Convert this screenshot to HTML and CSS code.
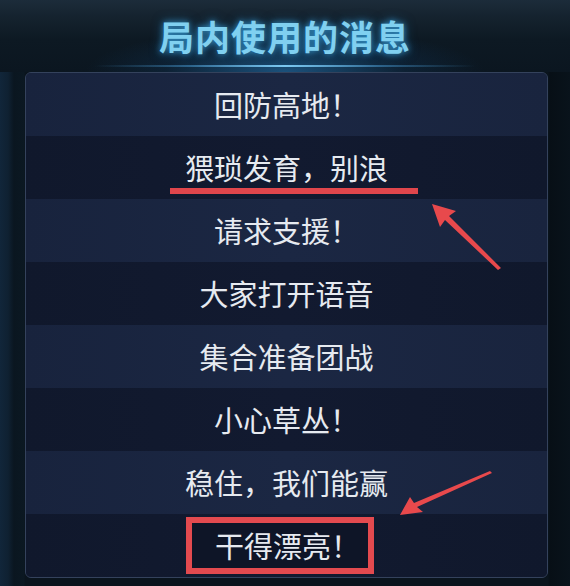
FILE: index.html
```html
<!DOCTYPE html>
<html lang="zh-CN">
<head>
<meta charset="utf-8">
<title>局内使用的消息</title>
<link rel="stylesheet" href="styles.css">
</head>
<body>
<div class="screen">
  <header class="header">
    <h1 class="title">局内使用的消息</h1>
    <div class="glow-line"></div>
  </header>
  <main class="panel">
    <div class="row odd"><span class="msg">回防高地！</span></div>
    <div class="row even"><span class="msg">猥琐发育，别浪<span class="underline"></span></span></div>
    <div class="row odd"><span class="msg">请求支援！</span></div>
    <div class="row even"><span class="msg">大家打开语音</span></div>
    <div class="row odd"><span class="msg">集合准备团战</span></div>
    <div class="row even"><span class="msg">小心草丛！</span></div>
    <div class="row odd"><span class="msg">稳住，我们能赢</span></div>
    <div class="row even"><span class="msg boxed">干得漂亮！</span></div>
  </main>
  <svg class="arrows" width="570" height="586" viewBox="0 0 570 586">
    <polygon points="432,204 456,211 449,216 501,268 498,270 445,220 440,227" fill="#e8494c"/>
    <polygon points="400,515 410,497 414,503 490,471 492,473 417,507 423,512" fill="#e8494c"/>
  </svg>
</div>
</body>
</html>
```
FILE: styles.css
```css
html, body {
  margin: 0;
  padding: 0;
}
body {
  width: 570px;
  height: 586px;
  overflow: hidden;
  background: #0a141d;
  font-family: "Noto Sans CJK SC", "Noto Sans", sans-serif;
}
.screen {
  position: relative;
  width: 570px;
  height: 586px;
  background:
    linear-gradient(90deg, #11263a 0px, #0f2132 8px, #0a1620 14px, #0b1822 24px, transparent 25px, transparent 548px, #070f16 550px, #09131b 570px);
}
.header {
  height: 72px;
  position: relative;
  background:
    radial-gradient(ellipse 200px 44px at 50% 100%, rgba(40, 130, 200, 0.55), rgba(20, 70, 120, 0.22) 60%, transparent 100%),
    linear-gradient(180deg, #1c2c3a 0px, #15232f 16px, #0d1923 40px, #0b1620 72px);
  display: flex;
  flex-direction: column;
  align-items: center;
}
.title {
  margin: 14px 0 0 0;
  font-size: 35px;
  line-height: 44px;
  font-weight: 700;
  letter-spacing: 1px;
  color: #80d0f0;
  text-shadow: 0 0 6px rgba(60, 170, 230, 0.8), 0 0 12px rgba(40, 140, 210, 0.5);
}
.glow-line {
  margin-top: 7px;
  width: 380px;
  height: 2px;
  background: linear-gradient(90deg, transparent, rgba(80, 170, 230, 0.45) 25%, #7cc8f0 50%, rgba(80, 170, 230, 0.45) 75%, transparent);
}
.panel {
  margin: 0 22px 0 25px;
  height: 506px;
  border: 1px solid #34425c;
  border-radius: 6px;
  box-sizing: border-box;
  overflow: hidden;
  display: flex;
  flex-direction: column;
  background: #141d33;
}
.row {
  flex: 1;
  display: flex;
  align-items: center;
  justify-content: center;
}
.row.odd {
  background: linear-gradient(90deg, #18233d, #1b2743 50%, #19243e);
}
.row.even {
  background: linear-gradient(90deg, #10182c, #121a30 50%, #10182c);
}
.msg {
  position: relative;
  font-size: 29px;
  line-height: 34px;
  color: #e6eaf0;
  margin-top: -2px;
}
.underline {
  position: absolute;
  left: -15px;
  right: -30px;
  top: 38px;
  height: 6px;
  background: #e0464c;
}
.boxed {
  border: 6px solid #e34a4f;
  padding: 5px 8px 6px 23px;
  margin: 0 13px 0 0;
  background: #0e1527;
}
.arrows {
  position: absolute;
  left: 0;
  top: 0;
  pointer-events: none;
}
```
